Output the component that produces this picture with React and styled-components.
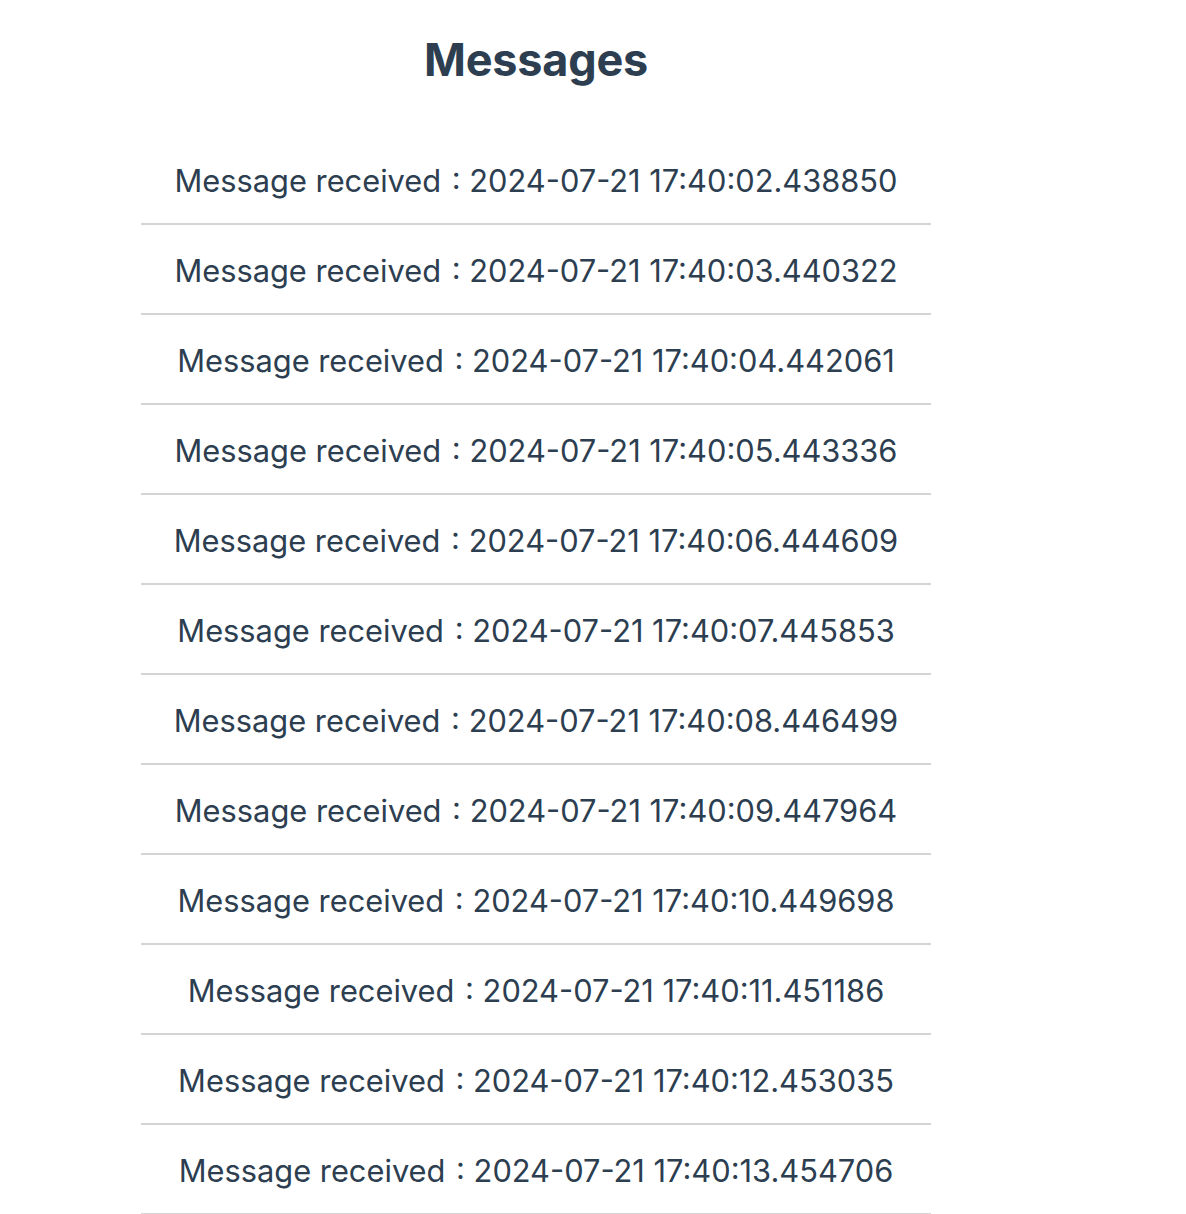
import React from 'react';
import styled, { createGlobalStyle } from 'styled-components';

const GlobalStyle = createGlobalStyle`
    body {
        margin: 0;
        background: #ffffff;
        font-family: Inter, "Noto Sans", sans-serif;
        color: #2c3e50;
    }
`;

const Page = styled.div`
    width: 790px;
    margin-left: 141px;
    text-align: center;
`;

const Title = styled.h1`
    margin: 0;
    height: 120px;
    line-height: 120px;
    font-size: 45px;
    font-weight: 700;
    letter-spacing: -0.2px;
`;

const List = styled.ul`
    list-style: none;
    margin: 15px 0 0;
    padding: 0;
`;

const Row = styled.li`
    height: 84px;
    padding-top: 4px;
    line-height: 84px;
    border-bottom: 2px solid #d4d4d4;
    font-size: 30.8px;
    font-weight: 400;
`;

const Sep = styled.span`
    margin-left: 2px;
`;

const times = [
    '17:40:02.438850',
    '17:40:03.440322',
    '17:40:04.442061',
    '17:40:05.443336',
    '17:40:06.444609',
    '17:40:07.445853',
    '17:40:08.446499',
    '17:40:09.447964',
    '17:40:10.449698',
    '17:40:11.451186',
    '17:40:12.453035',
    '17:40:13.454706',
];

const App = () => {
    return (
        <Page>
            <GlobalStyle />
            <Title>Messages</Title>
            <List>
                {times.map((t) => (
                    <Row key={t}>Message received<Sep> : </Sep>2024-07-21 {t}</Row>
                ))}
            </List>
        </Page>
    );
};

export default App;
